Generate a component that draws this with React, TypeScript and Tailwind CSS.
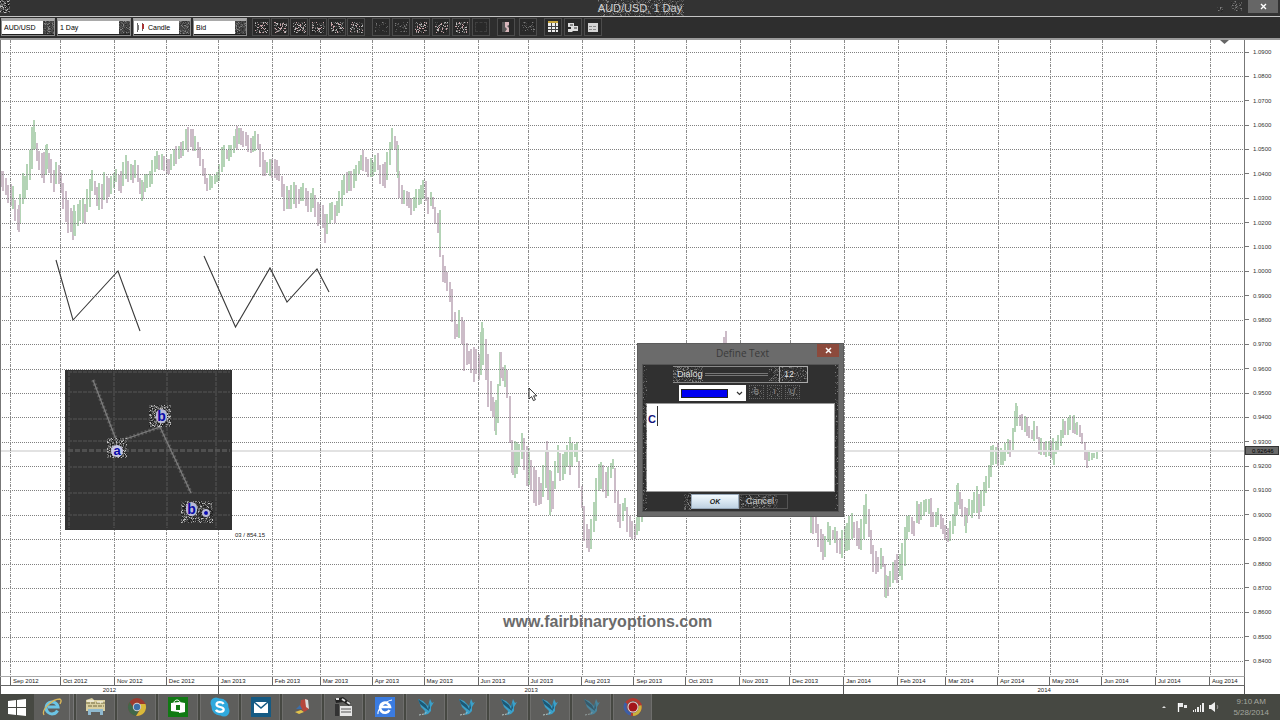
import React from "react";

const MONTHS: [string, number][] = [
  ["", 10], ["Sep 2012", 50], ["Oct 2012", 54], ["Nov 2012", 52], ["Dec 2012", 52], ["Jan 2013", 54],
  ["Feb 2013", 48], ["Mar 2013", 52], ["Apr 2013", 52], ["May 2013", 54], ["Jun 2013", 50], ["Jul 2013", 54],
  ["Aug 2013", 52], ["Sep 2013", 52], ["Oct 2013", 54], ["Nov 2013", 50], ["Dec 2013", 54], ["Jan 2014", 54],
  ["Feb 2014", 48], ["Mar 2014", 52], ["Apr 2014", 52], ["May 2014", 52], ["Jun 2014", 54], ["Jul 2014", 54],
  ["Aug 2014", 35],
];
const YEARS: [string, number][] = [["2012", 218], ["2013", 626], ["2014", 401]];
const PLOT_WIDTH = 1245;
const PRICES = Array.from({ length: 26 }, (_, i) => (1.09 - i * 0.01).toFixed(4));

// x, high, low for the turning points of the daily range
const RANGE: number[][] = [
  [0,170,185],[4,176,190],[8,186,202],[12,190,206],[14,202,217],[18,213,232],[21,174,203],[25,178,190],[29,148,178],[32,122,168],[34,134,145],[38,150,168],[43,155,180],[45,147,168],[50,158,178],[53,170,190],[56,160,180],[60,173,190],[64,190,222],[68,205,228],[71,214,235],[73,215,235],[77,205,225],[80,200,218],[84,205,222],[88,182,205],[91,172,190],[95,185,198],[99,190,212],[103,175,200],[108,180,195],[113,174,188],[115,170,178],[118,178,191],[121,172,190],[124,155,175],[128,163,180],[132,168,180],[136,160,175],[138,175,190],[141,185,200],[145,172,188],[149,175,187],[152,160,180],[155,155,165],[160,153,168],[164,157,173],[168,160,174],[172,152,165],[178,146,158],[183,140,156],[185,129,145],[190,131,148],[195,136,148],[200,150,168],[203,170,177],[206,177,192],[209,178,189],[214,174,184],[218,170,180],[221,145,170],[225,150,158],[230,145,156],[234,135,150],[236,127,142],[241,130,144],[246,132,145],[250,141,153],[255,132,150],[257,135,145],[260,152,172],[265,165,174],[268,158,172],[272,162,180],[277,164,172],[280,175,192],[284,190,208],[289,190,210],[293,182,200],[298,190,203],[303,186,200],[307,192,213],[312,192,205],[316,202,223],[320,208,226],[323,215,227],[325,225,243],[329,202,222],[334,205,220],[340,190,205],[345,172,188],[350,173,187],[355,165,183],[358,160,172],[362,152,168],[367,160,172],[372,165,174],[376,152,165],[380,167,185],[385,165,187],[388,145,165],[391,130,145],[394,140,152],[397,147,180],[399,185,200],[403,190,205],[408,195,206],[411,205,215],[416,190,205],[420,188,203],[424,178,192],
  [427,198,212],[429,193,205],[432,197,210],[435,210,225],[438,218,235],[440,232,262],[441,262,281],[445,268,280],[448,280,298],[451,292,313],[453,313,338],[456,325,335],[459,310,335],[461,317,345],[463,325,368],[466,350,362],[469,352,363],[472,347,383],[476,350,370],[478,355,380],[481,323,370],[483,330,360],[487,352,400],[490,385,410],[493,405,420],[495,400,433],[498,375,415],[499,354,378],[502,370,378],[505,362,390],[508,380,408],[509,410,450],[511,440,473],[515,450,470],[517,440,475],[519,445,460],[522,432,455],[525,445,485],[529,455,482],[533,470,503],[537,475,503],[540,483,505],[543,465,495],[546,442,485],[549,470,512],[552,485,505],[554,465,490],[557,447,470],[560,455,480],[564,452,470],[568,439,465],[570,450,482],[572,442,455],[576,445,460],[578,468,485],[581,495,510],[583,510,540],[587,533,547],[589,530,550],[592,512,535],[595,480,520],[597,464,490],[601,463,485],[605,475,497],[607,470,498],[609,463,480],[612,460,470],[615,485,510],[619,505,528],[624,500,510],[628,515,538],[633,525,540],[636,518,535],[641,500,520],
];
const RANGE_LATE: number[][] = [
  [810,515,533],[813,520,530],[817,524,540],[821,535,556],[824,540,557],[827,525,540],[830,528,538],[834,533,540],[838,540,553],[841,532,554],[845,525,545],[848,522,550],[850,515,535],[854,522,535],[858,530,547],[862,515,545],[865,495,520],[868,515,535],[870,530,550],[873,550,572],[877,560,572],[880,547,565],[882,555,565],[884,575,594],[888,580,592],[891,562,580],[895,560,580],[899,557,575],[903,530,578],[905,520,540],[909,517,530],[913,525,535],[916,500,515],[919,510,525],[922,505,515],[926,498,512],[930,505,520],[934,515,528],[938,508,525],[942,520,535],[947,530,540],[951,520,535],[954,505,525],[957,484,505],[961,502,515],[965,515,530],[967,500,515],[970,505,515],[975,490,510],[978,495,513],[982,490,508],[986,475,490],[989,455,480],[993,445,460],[997,450,462],[1002,450,463],[1006,443,453],[1010,440,455],[1013,420,440],[1015,405,420],[1018,415,425],[1022,413,430],[1026,420,433],[1030,430,437],[1036,425,435],[1038,440,452],[1044,445,453],[1050,442,458],[1054,445,455],[1058,435,450],[1062,422,432],[1066,423,430],[1072,419,430],[1076,425,432],[1080,427,437],[1084,450,462],[1090,455,461],[1094,451,458],[1097,449,456],
];
// single-day extremes: x, high, low
const SPIKES = [
  [33,120,150],[18,205,232],[45,145,175],[73,205,235],[141,180,201],[185,129,150],[236,126,150],[324,225,243],[391,129,150],[397,145,178],
  [439,210,250],[481,322,360],[495,400,435],[500,352,378],[512,450,475],[546,441,485],[549,470,515],[569,437,465],[588,530,552],
  [865,494,520],[885,575,598],[957,483,505],[965,515,533],[1015,403,425],[1053,450,465],[1073,415,430],
];

function random(seed: number) {
  let s = seed * 7919 + 17;
  return () => {
    s = (s * 1103515245 + 12345) % 2147483648;
    return s / 2147483648;
  };
}

function Candles({ range, seed }: { range: number[][]; seed: number }) {
  const rnd = random(seed);
  const bars: React.ReactElement[] = [];
  let k = 0;
  let lastHigh = range[0][1];
  let lastLow = range[0][2];
  const end = range[range.length - 1][0];
  for (let x = range[0][0]; x <= end; x += 2.4) {
    while (k < range.length - 2 && range[k + 1][0] < x) k++;
    const a = range[k];
    const b = range[k + 1];
    const t = Math.min(1, (x - a[0]) / (b[0] - a[0]));
    const long = rnd() > 0.75 ? 3 : 0;
    let high = a[1] + (b[1] - a[1]) * t - rnd() * (5 + long) + 1;
    let low = a[2] + (b[2] - a[2]) * t + rnd() * (5 + long) - 1;
    high = Math.min(high, lastLow - 2);
    low = Math.max(low, lastHigh + 2);
    const up = (high + low) / 2 + (rnd() - 0.5) * 8 < (lastHigh + lastLow) / 2;
    lastHigh = high;
    lastLow = low;
    bars.push(
      <rect key={x} x={Math.round(x)} y={Math.round(high)} width={2} height={Math.max(3, Math.round(low - high))} fill={up ? "#b4d4b6" : "#ccbcc8"} />,
    );
  }
  return <g>{bars}</g>;
}

const TONES = ["#1c1c1c", "#555555", "#8a8a8a", "#bdbdbd", "#444444", "#2a2a2a", "#707070"];
function Speckle({ w, h, seed, density = 0.6, soft = false, tint, className = "" }: {
  w: number; h: number; seed: number; density?: number; soft?: boolean; tint?: string; className?: string;
}) {
  const rnd = random(seed);
  const dots: React.ReactElement[] = [];
  for (let y = 0; y < h; y++)
    for (let x = 0; x < w; x++) {
      const r = rnd();
      const tone = rnd();
      if (r < density)
        dots.push(
          <rect key={`${x}-${y}`} x={x} y={y} width={1} height={1} opacity={soft ? 0.55 : 1}
            fill={tint && tone > 0.82 ? tint : TONES[Math.floor(tone * TONES.length)]} />,
        );
    }
  return (
    <svg width={w} height={h} viewBox={`0 0 ${w} ${h}`} shapeRendering="crispEdges" aria-hidden="true" className={className}>
      {dots}
    </svg>
  );
}

function Picker({ label, value, width, seed, candle = false }: { label: string; value: string; width: string; seed: number; candle?: boolean }) {
  return (
    <div className={`${width} flex h-[18px] shrink-0 items-start border border-t-[3px] border-[#8c8c8c] border-t-[#a9a9a9] bg-[#202020]`}>
      {candle && (
        <svg width="12" height="13" viewBox="0 0 12 13" shapeRendering="crispEdges" aria-hidden="true" className="bg-white">
          <path d="M3.500 2v9M8.500 2v8" stroke="#666" />
          <path d="M3 4h2v5H3z" fill="#777" />
          <path d="M8 3h2v5H8z" fill="#a33" />
        </svg>
      )}
      <select aria-label={label} defaultValue={value} className="h-[13px] min-w-0 flex-1 appearance-none bg-white pl-[2px] text-[7px] leading-[13px] text-black outline-none">
        <option>{value}</option>
      </select>
      <Speckle w={11} h={13} seed={seed} density={0.7} soft className="shrink-0 bg-[#444]" />
    </div>
  );
}

type Tool = { name: string; kind: "chart" | "dim" | "grid" | "box" | "print" | "flag" };
const TOOLS: { gap: string; tools: Tool[] }[] = [
  { gap: "gap-px", tools: ["Cursor", "Zoom in", "Zoom out", "Trend", "Indicator", "Shapes"].map((name) => ({ name, kind: "chart" as const })) },
  {
    gap: "gap-[2px]",
    tools: [
      { name: "Range", kind: "dim" }, { name: "Baseline", kind: "dim" }, { name: "Bars", kind: "chart" },
      { name: "Patterns", kind: "chart" }, { name: "Lines", kind: "chart" }, { name: "Blank", kind: "box" },
    ],
  },
  { gap: "gap-1", tools: [{ name: "Order", kind: "flag" }, { name: "Position", kind: "dim" }] },
  { gap: "gap-[2px]", tools: [{ name: "Grid", kind: "grid" }, { name: "Print", kind: "print" }, { name: "Table", kind: "box" }] },
];

function ToolButton({ tool, seed }: { tool: Tool; seed: number }) {
  return (
    <button type="button" aria-label={tool.name} className="relative flex h-[18px] w-[18px] items-center justify-center border border-[#4c4c4c] bg-[#292929]">
      {tool.kind === "chart" && <Speckle w={13} h={11} seed={seed} density={0.55} tint="#c9a3a8" />}
      {tool.kind === "dim" && <Speckle w={13} h={10} seed={seed} density={0.35} soft />}
      {tool.kind === "flag" && (
        <svg width="14" height="14" viewBox="0 0 14 14" aria-hidden="true"><path d="M3 2h7v10H3z" fill="#555" /><path d="M6 2h4v3L8 6l2 2v4H6l2-3-2-2z" fill="#d8b6bb" /></svg>
      )}
      {tool.kind === "grid" && (
        <svg width="14" height="14" viewBox="0 0 14 14" shapeRendering="crispEdges" aria-hidden="true"><path d="M2 2h10v10H2z" fill="#eee" /><path d="M2 2h10" stroke="#c8a63c" strokeWidth="2" /><path d="M5 3v9M9 3v9M2 6h10M2 9h10" stroke="#444" /></svg>
      )}
      {tool.kind === "print" && (
        <svg width="14" height="14" viewBox="0 0 14 14" aria-hidden="true"><path d="M2 3h6v3h4v5H7l-1 1H2V9h3V7H2z" fill="#ddd" /><path d="M4 5h3M8 8h3" stroke="#333" /></svg>
      )}
      {tool.kind === "box" && tool.name === "Table" && (
        <svg width="14" height="14" viewBox="0 0 14 14" shapeRendering="crispEdges" aria-hidden="true"><path d="M2 3h10v9H2z" fill="#d5d5d5" /><path d="M3 6h8M3 9h8" stroke="#888" strokeDasharray="3 1" /></svg>
      )}
      {tool.kind === "box" && tool.name !== "Table" && <span className="h-[10px] w-3 border border-dashed border-[#3f3f3f]" />}
    </button>
  );
}

function Chart() {
  let x = 0;
  const verticals = MONTHS.slice(0, -1).map(([, w]) => (x += w));
  return (
    <svg viewBox="0 40 1245 636" preserveAspectRatio="none" className="block h-full w-full" role="img" aria-label="AUD/USD daily candles">
      <g shapeRendering="crispEdges">
        <Candles range={RANGE} seed={3} />
        <Candles range={RANGE_LATE} seed={8} />
        {SPIKES.map(([sx, high, low]) => (
          <rect key={sx} x={sx} y={high} width={2} height={low - high} fill={sx % 2 ? "#b4d4b6" : "#ccbcc8"} />
        ))}
        <path d="M723 337h2v7h-2zM725 331h2v13h-2z" fill="#ccbcc8" />
        <path d="M0 451h1245" stroke="#e2e2e2" strokeWidth="2" />
        {PRICES.map((p, i) => (
          <path key={p} d={`M0 ${Math.round(52 + i * 24.36) + 0.5}H1249`} stroke="#808080" strokeDasharray="1 1" />
        ))}
        {verticals.map((v) => (
          <path key={v} d={`M${v + 0.5} 40V676`} stroke="#8c8c8c" strokeDasharray="3 1 1 1" />
        ))}
        <path d="M0.500 170V225" stroke="#6a4a4a" />
        <path d="M0.500 40V676M1244.500 40V676" stroke="#777" />
      </g>
      <path d="M1220 40h9l-4.500 4z" fill="#666" />
      <g fill="none" stroke="#3a3a3a" strokeWidth="1.100">
        <path d="M56 260L73 320L118 271L140 331" />
        <path d="M204 256L235.500 327L270 268L287 302L317 269L329 292" />
      </g>
      <path d="M529 388v11l2.600-2.400 1.800 4 2-.9-1.800-3.800h3.200z" fill="#fff" stroke="#222" strokeWidth="0.900" />
    </svg>
  );
}

function Snapshot() {
  return (
    <div className="absolute left-[65px] top-[330px] h-[160px] w-[167px] bg-[#333]">
      <svg width="167" height="160" viewBox="65 370 167 160" aria-hidden="true">
        <g stroke="#444" strokeWidth="2" strokeDasharray="4 1" shapeRendering="crispEdges">
          <path d="M68 372H230M68 392H230M68 419H230M68 441H230M68 467H230M68 493H230M68 515H230" />
          <path d="M69 372V528M114 372V528M167 372V528M216 372V528" />
        </g>
        <path d="M68 450.500H230" stroke="#5c5c5c" strokeWidth="3" strokeDasharray="5 2" opacity="0.700" />
        <g fill="none">
          <path d="M93 380L117 442L160 427L191 493" stroke="#555" strokeWidth="4" strokeDasharray="2 2" />
          <path d="M93 380L117 442L160 427L191 493" stroke="#7c7c7c" strokeWidth="1.300" />
        </g>
      </svg>
      <span className="absolute left-[42px] top-[68px] flex h-5 w-5 items-center justify-center pt-[5px]">
        <Speckle w={20} h={20} seed={21} density={0.85} className="absolute inset-0" />
        <b className="relative rounded-full bg-[#c9c9e6] px-[2px] text-[13px] leading-[12px] text-[#0a0aa8]">a</b>
      </span>
      <span className="absolute left-[84px] top-[35px] flex h-[22px] w-[22px] items-center justify-center pl-[3px]">
        <Speckle w={22} h={22} seed={22} density={0.85} className="absolute inset-0" />
        <b className="relative rounded-full bg-[#b9b9d6] px-px text-[14px] leading-[14px] text-[#0a0aa8]">b</b>
      </span>
      <span className="absolute left-[116px] top-[131px] flex h-[22px] w-8 items-center justify-center gap-[7px] pb-[6px]">
        <Speckle w={32} h={22} seed={23} density={0.6} className="absolute inset-0" />
        <b className="relative rounded-full bg-[#b9b9d6] px-px text-[14px] leading-[14px] text-[#0a0aa8]">b</b>
        <i className="relative mt-2 h-1 w-1 rounded-full bg-[#0a0ac0] outline-2 outline-[#b9b9d6]" />
      </span>
    </div>
  );
}

function DefineText() {
  return (
    <section role="dialog" aria-label="Define Text" className="absolute left-[637px] top-[303px] flex w-[207px] flex-col border border-[#5c5c5c] bg-[#6b6b6b] px-1 pb-1">
      <header className="flex h-5 items-start">
        <h2 className="flex-1 pl-[26px] pt-px text-center font-['Open_Sans'] text-[10px] leading-4 text-[#3a3a3a]">Define Text</h2>
        <button type="button" aria-label="Close" className="flex h-[13px] w-[22px] items-center justify-center bg-[#8c4a3c]">
          <svg width="7" height="7" viewBox="0 0 7 7" aria-hidden="true"><path d="M1 1l5 5M6 1L1 6" stroke="#fff" strokeWidth="1.500" /></svg>
        </button>
      </header>
      <div className="relative flex flex-col border border-[#555] bg-[#303030] px-[3px]">
        <Speckle w={4} h={146} seed={31} density={0.3} soft className="absolute left-0 top-0" />
        <Speckle w={3} h={146} seed={32} density={0.3} soft className="absolute right-0 top-0" />
        <div className="flex h-[19px] items-start pl-[27px] pt-px">
          <div className="relative flex h-[17px] w-[106px] items-center border-y border-[#8a8a8a]">
            <Speckle w={30} h={15} seed={33} density={0.6} soft className="absolute left-0 top-0" />
            <span className="absolute left-8 right-[11px] top-[6px] h-[3px] border-y border-[#777]" />
            <Speckle w={10} h={15} seed={34} density={0.6} soft className="absolute right-0 top-0" />
            <select aria-label="Font" className="relative h-[15px] w-full appearance-none bg-transparent pl-1 text-[9px] leading-[15px] text-[#ddd] outline-none"><option>Dialog</option></select>
          </div>
          <div className="relative flex h-[17px] w-[29px] items-center border border-[#aaa]">
            <Speckle w={27} h={15} seed={35} density={0.5} soft className="absolute left-0 top-0" />
            <select aria-label="Size" className="relative h-[15px] w-full appearance-none bg-transparent pl-1 text-[9px] leading-[15px] text-[#ddd] outline-none"><option>12</option></select>
          </div>
        </div>
        <div className="flex h-[19px] items-start gap-[3px] pl-[33px] pt-px">
          <div className="relative flex h-4 w-[67px] items-center bg-white">
            <select aria-label="Color" className="absolute inset-0 appearance-none bg-transparent text-[7px] text-transparent outline-none"><option>Blue</option></select>
            <span className="ml-[2px] h-[9px] w-[47px] border border-[#222] bg-[#0000f0]" />
            <svg width="7" height="5" viewBox="0 0 7 5" aria-hidden="true" className="ml-2"><path d="M1 1l2.500 2.500L6 1" fill="none" stroke="#333" strokeWidth="1.200" /></svg>
          </div>
          {["B", "I", "U"].map((s, i) => (
            <button key={s} type="button" className="relative flex h-[14px] w-[15px] items-center justify-center border border-dotted border-[#666]">
              <Speckle w={11} h={10} seed={40 + i} density={0.4} soft className="absolute" />
              <b className="relative text-[8px] leading-[12px] text-[#777]">{s}</b>
            </button>
          ))}
        </div>
        <textarea aria-label="Text" defaultValue="C" className="block h-[89px] w-full resize-none border border-[#999] bg-white px-px pt-[7px] text-[11px] font-bold leading-4 text-[#14147a] outline-none" />
        <span className="absolute left-[14px] top-[41px] h-5 w-px bg-[#333]" />
        <div className="flex h-[19px] items-center pl-[38px]">
          <Speckle w={7} h={17} seed={51} density={0.6} soft />
          <button type="button" className="h-[15px] w-12 border border-[#9ab] bg-gradient-to-b from-[#f2faff] to-[#bfd2e2] text-[7px] font-bold italic leading-[13px] text-[#222]">OK</button>
          <button type="button" className="relative flex h-[15px] w-[49px] items-center border border-[#555] pl-[6px]">
            <Speckle w={38} h={13} seed={52} density={0.6} soft className="absolute left-0 top-0" />
            <span className="relative text-[9px] leading-[13px] text-[#ccc]">Cancel</span>
          </button>
        </div>
      </div>
    </section>
  );
}

function Bird({ dim = false }: { dim?: boolean }) {
  return (
    <svg width="20" height="20" viewBox="0 0 20 20" aria-hidden="true" opacity={dim ? 0.6 : 1}>
      <path d="M2 2l5 2 5 5 2-7 2 4 2-1-3 5v4l-3 3-4 1 1-4-4-4z" fill="#3ba0c9" />
      <path d="M2 2l8 6 3 6-4-3-5-4zM13 5l1 6-2 3z" fill="#1c5875" />
      <path d="M3 18l5-1 3-2" stroke="#b5c9c9" fill="none" strokeDasharray="2 1" />
    </svg>
  );
}

const ICONS: Record<string, React.ReactElement> = {
  windows: <svg width="18" height="18" viewBox="0 0 18 18" aria-hidden="true"><path d="M0 3l8-1v7H0zM9 2l9-1v8H9zM0 10h8v7l-8-1zM9 10h9v8l-9-1z" fill="#fff" /></svg>,
  ie: (
    <svg width="20" height="20" viewBox="0 0 20 20" aria-hidden="true">
      <path d="M15.500 13.500A6 6 0 1 1 16 10H6" fill="none" stroke="#6cc4e4" strokeWidth="3" />
      <path d="M2 18C-1 13 10 2 18 2c2 1 1 3 0 5" fill="none" stroke="#d9b65a" strokeWidth="1.300" />
    </svg>
  ),
  explorer: (
    <svg width="22" height="20" viewBox="0 0 22 20" aria-hidden="true">
      <path d="M1 3l6-2 2 2h11v11H1z" fill="#d9cfa0" /><path d="M1 6h19M3 9h16" stroke="#70683f" strokeDasharray="4 1" /><path d="M3 18v-6h15v6h-3v-3H6v3z" fill="#8fb9cf" /><path d="M2 4h7M12 5h6" stroke="#fff" />
    </svg>
  ),
  chrome: (
    <svg width="20" height="20" viewBox="0 0 20 20" aria-hidden="true">
      <circle cx="10" cy="10" r="9" fill="#9d3a2e" />
      <path d="M2.500 5A9 9 0 0 0 9 19l4-7-6-1z" fill="#41684a" />
      <path d="M18.500 7A9 9 0 0 1 9 19l5-8-2-4z" fill="#d9b93a" />
      <circle cx="10" cy="10" r="4.200" fill="#d0d0d0" />
      <circle cx="10" cy="10" r="3.200" fill="#3d6fa8" />
    </svg>
  ),
  store: (
    <svg width="20" height="20" viewBox="0 0 20 20" aria-hidden="true"><path d="M0 0h20v20H0z" fill="#117a14" /><path d="M3 6l8-1v10l-8-1zM11 5l6 1v9l-6 1z" fill="#fff" /><path d="M6 6c0-4 6-4 6 0" stroke="#fff" fill="none" /><path d="M8 8h4v5H8z" fill="#117a14" /></svg>
  ),
  skype: (
    <svg width="20" height="20" viewBox="0 0 20 20" aria-hidden="true"><circle cx="10" cy="10" r="8.500" fill="#2fa9dd" /><circle cx="6" cy="6" r="5.500" fill="#2fa9dd" /><circle cx="14" cy="14" r="5.500" fill="#2fa9dd" /><path d="M13.500 7c-1-2.500-7-2.500-7 .5 0 3.500 7.200 1.500 7.200 5 0 3-6.500 3-7.700.2" fill="none" stroke="#fff" strokeWidth="2.200" /></svg>
  ),
  mail: (
    <svg width="20" height="20" viewBox="0 0 20 20" aria-hidden="true"><path d="M0 0h20v20H0z" fill="#155a83" /><path d="M3 5h14v11H3z" fill="#fff" /><path d="M3 5l7 6 7-6" fill="none" stroke="#155a83" strokeWidth="1.600" /></svg>
  ),
  paint: (
    <svg width="20" height="20" viewBox="0 0 20 20" aria-hidden="true"><path d="M9 3l6-1 2 10-5 3-4-5z" fill="#b6463c" /><path d="M13 2l3 1 1 9-3-2z" fill="#dcdcdc" /><path d="M3 15l6-2 3 2-5 2z" fill="#e3c34b" /><path d="M4 12l4-4 2 4z" fill="#3d6ea8" /></svg>
  ),
  clapper: (
    <svg width="20" height="22" viewBox="0 0 20 22" aria-hidden="true"><path d="M1 3l8-2 8 6-2 3-6-4-7 1z" fill="#222" /><path d="M2 3l3 0M8 3l3 2M13 6l3 2" stroke="#ddd" strokeWidth="2" /><path d="M6 10h12v10H6z" fill="#e6e6e6" /><path d="M7 13h10M7 16h10" stroke="#555" /><path d="M1 8h4v12H1z" fill="#333" /></svg>
  ),
  ieBlue: (
    <svg width="20" height="20" viewBox="0 0 20 20" aria-hidden="true"><path d="M0 0h20v20H0z" fill="#3a7be0" /><path d="M14.500 13A5 5 0 1 1 15 10H6" fill="none" stroke="#fff" strokeWidth="2.600" /><path d="M3 17C2 13 10 4 17 3" fill="none" stroke="#fff" strokeWidth="1.200" /></svg>
  ),
  bird: <Bird />,
  birdDim: <Bird dim />,
  disc: (
    <svg width="20" height="20" viewBox="0 0 20 20" aria-hidden="true"><circle cx="10" cy="10" r="7.500" fill="none" stroke="#b5382e" strokeWidth="3" /><path d="M3 6a7.500 7.500 0 0 0 5 11" fill="none" stroke="#3b5fa8" strokeWidth="3" /><path d="M10 17.500a7.500 7.500 0 0 0 7-9" fill="none" stroke="#c9b33c" strokeWidth="3" /><circle cx="10" cy="10" r="5.500" fill="#e6d9d9" /><circle cx="10" cy="10" r="4.500" fill="#a3151b" /></svg>
  ),
};

const TASKS: [string, string, boolean][] = [
  ["File Explorer", "explorer", false], ["Chrome", "chrome", false], ["Store", "store", true], ["Skype", "skype", false],
  ["Mail", "mail", false], ["Paint", "paint", true], ["Movie Editor", "clapper", false], ["Browser", "ieBlue", false],
  ["Platform 1", "bird", false], ["Platform 2", "bird", true], ["Platform 3", "bird", false], ["Platform 4", "bird", true],
  ["Platform 5", "birdDim", false], ["Recorder", "disc", false],
];

function Taskbar() {
  return (
    <footer className="flex h-[26px] shrink-0 items-stretch bg-[#464842]">
      <button type="button" aria-label="Start" className="flex w-[34px] items-center justify-center">{ICONS.windows}</button>
      <button type="button" aria-label="Internet Explorer" className="flex w-[36px] items-center justify-center border-r border-[#777] bg-[#5e5e5c]">{ICONS.ie}</button>
      <span className="mr-[2px] w-1 border-r border-[#777] bg-[#5e5e5c]" />
      <nav className="flex gap-[2px]">
        {TASKS.map(([name, icon, wide]) => (
          <button key={name} type="button" aria-label={name} className={`${wide ? "w-10" : "w-[39px]"} flex items-center justify-center border-x border-[#6e6e6c] bg-[#5e5e5c]`}>
            {ICONS[icon]}
          </button>
        ))}
      </nav>
      <div className="ml-auto flex items-center gap-[5px] pr-[11px]">
        <svg width="4" height="4" viewBox="0 0 4 4" aria-hidden="true" className="mr-[6px]"><path d="M0 3l2-2 2 2z" fill="#ddd" /></svg>
        <svg width="11" height="10" viewBox="0 0 11 10" aria-hidden="true"><path d="M1.500 1v9" stroke="#fff" strokeWidth="1.300" /><path d="M2 1h4v4H2zM7 3h3v3H7z" fill="#e8e8e8" /></svg>
        <svg width="11" height="9" viewBox="0 0 11 9" shapeRendering="crispEdges" aria-hidden="true"><path d="M0 7h1v2H0zM2 6h1v3H2zM4 4h2v5H4zM7 2h1v7H7zM9 0h2v9H9z" fill="#eee" /></svg>
        <svg width="11" height="10" viewBox="0 0 11 10" aria-hidden="true"><path d="M0 3h2l4-3v10L2 7H0z" fill="#eee" /><path d="M8 3c1 1 1 3 0 4" stroke="#999" fill="none" /></svg>
        <time className="ml-2 text-center text-[8px] leading-[11px] text-[#a3a59f]">9:10 AM<br />5/28/2014</time>
      </div>
    </footer>
  );
}

export default function App() {
  return (
    <div className="flex h-screen w-full flex-col overflow-hidden bg-white font-['Liberation_Sans',sans-serif] text-black">
      <header className="grid h-[17px] shrink-0 grid-cols-[1fr_auto_1fr] items-start border-b border-[#c4c4c4] bg-[#333]">
        <Speckle w={10} h={13} seed={1} density={0.9} />
        <h1 className="relative flex h-4 items-center text-[11px] leading-[14px] text-[#d0d0d0]">
          <Speckle w={86} h={16} seed={2} density={0.5} soft className="absolute left-0 top-0" />
          <span className="relative">AUD/USD, 1 Day</span>
        </h1>
        <div className="flex items-start justify-end">
          <button type="button" aria-label="Minimize" className="flex h-3 w-4 items-end justify-center"><Speckle w={6} h={5} seed={5} density={0.5} soft /></button>
          <button type="button" aria-label="Restore" className="flex h-3 w-4 items-center justify-center"><Speckle w={11} h={10} seed={6} density={0.5} soft /></button>
          <button type="button" aria-label="Close window" className="ml-1 mr-[2px] flex h-[13px] w-[30px] items-center justify-center bg-[#666]">
            <svg width="7" height="7" viewBox="0 0 7 7" aria-hidden="true"><path d="M1 1l5 5M6 1L1 6" stroke="#fff" strokeWidth="1.400" /></svg>
          </button>
        </div>
      </header>
      <div className="flex h-[23px] shrink-0 items-start gap-[2px] border-b-2 border-[#9a9a9a] bg-[#2e2e2e] pl-px pt-px">
        <Picker label="Instrument" value="AUD/USD" width="w-[54px]" seed={11} />
        <Picker label="Period" value="1 Day" width="w-[74px]" seed={12} />
        <Picker label="Chart type" value="Candle" width="w-[58px]" seed={13} candle />
        <Picker label="Side" value="Bid" width="w-[54px]" seed={14} />
        <div className="flex gap-[7px] pl-[3px]">
          {TOOLS.map(({ gap, tools }, g) => (
            <div key={g} className={`flex ${gap}`}>
              {tools.map((tool, i) => <ToolButton key={tool.name} tool={tool} seed={60 + g * 10 + i} />)}
            </div>
          ))}
        </div>
      </div>
      <main className="relative grid min-h-0 flex-1 grid-cols-[minmax(0,1fr)_35px] grid-rows-[minmax(0,1fr)_10px_8px]">
        <Chart />
        <div className="relative flex flex-col justify-between pb-[9px] pt-[6px]">
          {PRICES.map((p) => (
            <span key={p} className="flex h-3 items-center gap-1 text-[6px] leading-3 text-[#333]">
              <i className="h-px w-1 bg-[#777]" />{p}
            </span>
          ))}
          <span className="absolute left-0 right-px top-[63.8%] h-[9px] border border-[#333] bg-[#6a6a6a] pl-[6px] text-[6px] leading-[8px] text-black">0.92646</span>
        </div>
        <div className="flex border-b border-r border-t border-[#666] border-t-[#aaa]">
          {MONTHS.map(([name, w]) => (
            <span key={name} style={{ width: `${(w / PLOT_WIDTH) * 100}%` }} className="whitespace-nowrap border-l border-[#666] pl-[2px] text-[6px] leading-[9px] text-[#222]">{name}</span>
          ))}
        </div>
        <span />
        <div className="flex border-r border-[#555]">
          {YEARS.map(([name, w]) => (
            <span key={name} style={{ width: `${(w / PLOT_WIDTH) * 100}%` }} className="border-l border-[#555] text-center text-[6px] leading-[8px] text-[#222]">{name}</span>
          ))}
        </div>
        <Snapshot />
        <span className="absolute left-[235px] top-[490px] text-[6px] leading-[10px] text-[#222]">03 / 854.15</span>
        <p className="absolute left-[503px] top-[572px] text-[16px] font-bold leading-5 text-[#6b6b6b]">www.fairbinaryoptions.com</p>
        <DefineText />
      </main>
      <Taskbar />
    </div>
  );
}
